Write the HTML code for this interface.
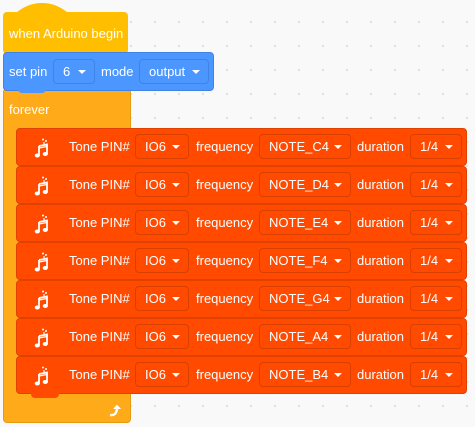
<!DOCTYPE html>
<html><head><style>
body{margin:0;width:475px;height:427px;overflow:hidden;background:#f9f9f9;
background-image:radial-gradient(circle,#dcdcdc 0.8px,transparent 1.2px);background-size:24px 24px;background-position:-1px 10px;
font-family:"Liberation Sans",sans-serif;font-size:13px;color:#fff;position:relative}
.a{position:absolute}
.t{position:absolute;white-space:nowrap;line-height:16px}
.dd{position:absolute;height:25px;border-radius:4px;box-sizing:border-box;line-height:23px;padding-left:9px;white-space:nowrap}
.dd:after{content:"";position:absolute;right:8px;top:10px;border-left:4px solid transparent;border-right:4px solid transparent;border-top:4px solid #fff}
.tone{position:absolute;left:16px;width:451px;height:38px;background:#FF4A00;border:1px solid #E04000;box-sizing:border-box;border-radius:4px}
.tone .dd{border:1px solid #D94000;background:#FF4A00;top:5px}
.tone .t{top:10px}
</style></head><body>
<!-- forever -->
<div class="a" style="left:3px;top:88px;width:128px;height:335px;background:#FFAB19;border:1px solid #E59A16;box-sizing:border-box;border-radius:4px"></div>
<div class="t" style="left:9px;top:102px">forever</div>
<svg class="a" style="left:108px;top:404px" width="14" height="13" viewBox="0 0 14 13"><path d="M2 11 Q8 12 9 5" stroke="#fff" stroke-width="2.4" fill="none"/><path d="M5 5 L9 0.5 L13 5 Z" fill="#fff"/></svg>
<!-- hat -->
<div class="a" style="left:3px;top:12px;width:125px;height:42px;background:#FFBF00;border-radius:4px"></div>
<div class="a" style="left:3px;top:3px;width:78px;height:40px;background:#FFBF00;border-radius:40px 40px 0 0"></div>
<div class="t" style="left:9px;top:26px">when Arduino begin</div>
<!-- set pin -->
<div class="a" style="left:3px;top:52px;width:211px;height:39px;background:#4C97FF;border:1px solid #3F84E5;box-sizing:border-box;border-radius:4px"></div>
<div class="a" style="left:18px;top:89px;width:28px;height:4px;background:#4C97FF;border-radius:0 0 4px 4px"></div>
<div class="t" style="left:9px;top:64px">set pin</div>
<div class="dd" style="left:53px;top:59px;width:42px;border:1px solid #3F84E5">6</div>
<div class="t" style="left:101px;top:64px">mode</div>
<div class="dd" style="left:139px;top:59px;width:70px;border:1px solid #3F84E5">output</div>

<div id="tones"></div>
<script>
var notes=["C4","D4","E4","F4","G4","A4","B4"],h="";
for(var i=0;i<7;i++){var y=128+i*38;
h+='<div class="tone" style="top:'+y+'px">'+
'<svg class="a" style="left:17px;top:9px" width="16" height="20" viewBox="0 0 16 20"><circle cx="9" cy="1.5" r="1" fill="#fff"/><circle cx="12" cy="3" r="1" fill="#fff"/><circle cx="10" cy="5" r="0.9" fill="#fff"/><path d="M5 8 L13 6.5 L13 16" stroke="#fff" stroke-width="1.8" fill="none"/><path d="M5 8 L5 17.5" stroke="#fff" stroke-width="1.8"/><path d="M5 10 L13 8.5" stroke="#fff" stroke-width="1.3"/><ellipse cx="3.3" cy="17.5" rx="2.6" ry="2" fill="#fff"/><ellipse cx="11.3" cy="16" rx="2.6" ry="2" fill="#fff"/></svg>'+
'<div class="t" style="left:52px">Tone PIN#</div>'+
'<div class="dd" style="left:118px;width:54px">IO6</div>'+
'<div class="t" style="left:179px">frequency</div>'+
'<div class="dd" style="left:242px;width:92px">NOTE_'+notes[i]+'</div>'+
'<div class="t" style="left:340px">duration</div>'+
'<div class="dd" style="left:393px;width:52px">1/4</div></div>';}
h+='<div class="a" style="left:31px;top:393px;width:28px;height:5px;background:#FF4A00;border-radius:0 0 4px 4px"></div>';
document.getElementById("tones").innerHTML=h;
</script>
</body></html>
